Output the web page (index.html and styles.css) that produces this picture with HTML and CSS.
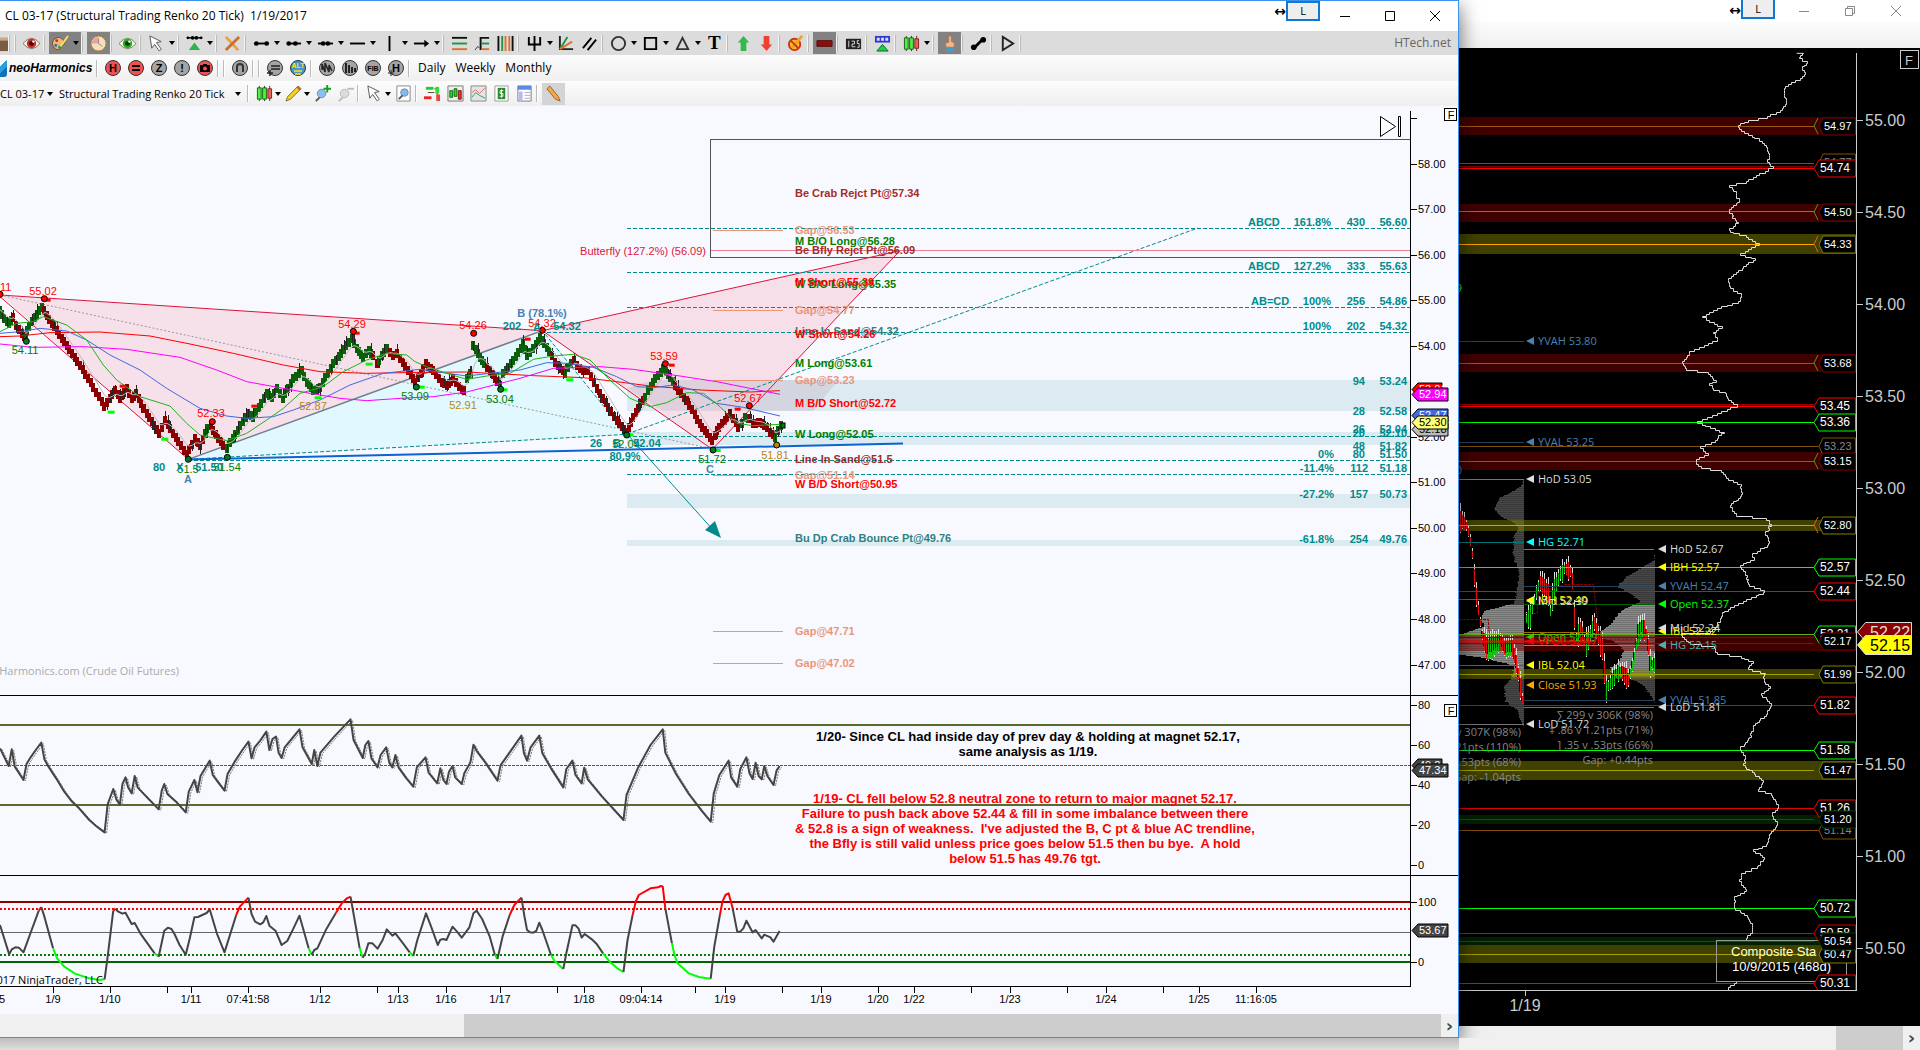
FILE: index.html
```html
<!DOCTYPE html>
<html lang="en">
<head>
<meta charset="utf-8">
<title>CL 03-17 (Structural Trading Renko 20 Tick)</title>
<link rel="stylesheet" href="styles.css">
</head>
<body>
<svg class="sprite" aria-hidden="true">
  <symbol id="caret" viewBox="0 0 8 8"><path d="M1 2h6L4 6z"/></symbol>
  <symbol id="box" viewBox="0 0 18 18"><path d="M0 3h12v14H0z" fill="#7a5c44"/><path d="M0 3h12v3H0z" fill="#c9a98c"/></symbol>
  <symbol id="eye-red" viewBox="0 0 18 18"><path d="M0 9q9-11 18 0-9 11-18 0z" fill="#fff8ea" stroke="#7d6a4a"/><circle cx="9" cy="9" r="5" fill="#c83030"/><circle cx="9" cy="9" r="2.500" fill="#300"/><circle cx="11" cy="7" r="1.300" fill="#fff"/></symbol>
  <symbol id="eye-green" viewBox="0 0 18 18"><path d="M0 9q9-11 18 0-9 11-18 0z" fill="#fffef0" stroke="#6a7d4a"/><circle cx="9" cy="9" r="5" fill="#28a828"/><circle cx="9" cy="9" r="2.500" fill="#030"/><circle cx="11" cy="7" r="1.300" fill="#fff"/></symbol>
  <symbol id="palette" viewBox="0 0 18 18"><path d="M1 6q7-8 13 2-1 3-4 3-1 6-6 4-5-4-3-9z" fill="#e8b878" stroke="#7a4a18"/><circle cx="5" cy="6" r="1.500" fill="#d22"/><circle cx="4" cy="11" r="1.500" fill="#26d"/><circle cx="8" cy="13" r="1.500" fill="#2a2"/><path d="M17 1L9 12" stroke="#f8e060" stroke-width="2"/></symbol>
  <symbol id="clock" viewBox="0 0 18 18"><circle cx="9" cy="9" r="8" fill="#f4dfb8" stroke="#b07838"/><path d="M9 9V2a7 7 0 0 0-7 7z" fill="#e8a0a0"/><path d="M9 4v5l4 3" fill="none" stroke="#888"/></symbol>
  <symbol id="cursor" viewBox="0 0 18 18"><path d="M2 1l12 6-5 1 5 7-2 2-5-7-3 4z" fill="#fff" stroke="#555"/></symbol>
  <symbol id="swing" viewBox="0 0 18 18"><path d="M1 3h16" stroke="#000" stroke-width="1.500"/><circle cx="2" cy="3" r="1.500"/><circle cx="7" cy="3" r="2"/><circle cx="11" cy="3" r="2"/><circle cx="16" cy="3" r="1.500"/><path d="M9 8l6 8H3z" fill="#2eb44c"/></symbol>
  <symbol id="pencils" viewBox="0 0 18 18"><path d="M2 2l13 14" stroke="#e8a040" stroke-width="3"/><path d="M16 2L2 16" stroke="#c87030" stroke-width="3"/></symbol>
  <symbol id="seg" viewBox="0 0 18 18"><path d="M3 9h12" stroke="#000" stroke-width="2"/><circle cx="3.500" cy="9" r="2.500"/><circle cx="14.500" cy="9" r="2.500"/></symbol>
  <symbol id="ray" viewBox="0 0 18 18"><path d="M2 9h15" stroke="#000" stroke-width="2"/><circle cx="4" cy="9" r="2.500"/><circle cx="11" cy="9" r="2.500"/></symbol>
  <symbol id="xline" viewBox="0 0 18 18"><path d="M1 9h16" stroke="#000" stroke-width="2"/><circle cx="6.500" cy="9" r="2.500"/><circle cx="11.500" cy="9" r="2.500"/></symbol>
  <symbol id="hline" viewBox="0 0 18 18"><path d="M1 9h16" stroke="#000" stroke-width="2"/></symbol>
  <symbol id="vline" viewBox="0 0 18 18"><path d="M9 1v16" stroke="#000" stroke-width="2"/></symbol>
  <symbol id="arrow" viewBox="0 0 18 18"><path d="M1 9h12" stroke="#000" stroke-width="2"/><path d="M12 5l5 4-5 4z"/></symbol>
  <symbol id="fibh" viewBox="0 0 18 18"><path d="M1 3h16" stroke="#111" stroke-width="2"/><path d="M1 9h16" stroke="#1a9a40" stroke-width="2"/><path d="M1 15h16" stroke="#e07030" stroke-width="2"/></symbol>
  <symbol id="fibe" viewBox="0 0 18 18"><path d="M7 2v14M7 3h9" stroke="#111" stroke-width="2" fill="none"/><path d="M8 9h8" stroke="#1a9a40" stroke-width="2"/><path d="M8 15h8" stroke="#e07030" stroke-width="2"/><path d="M1 16l3-4 2 2" stroke="#333" fill="none"/></symbol>
  <symbol id="fibv" viewBox="0 0 18 18"><path d="M1.500 1v16M16.500 1v16" stroke="#111" stroke-width="2"/><path d="M5.500 1v16" stroke="#1a9a40" stroke-width="2"/><path d="M9 1v16" stroke="#e07030" stroke-width="2"/><path d="M13 1v16" stroke="#e07030" stroke-width="2"/></symbol>
  <symbol id="fork" viewBox="0 0 18 18"><path d="M3 2v8h12V2M9 1v16" stroke="#000" stroke-width="2" fill="none"/></symbol>
  <symbol id="fan" viewBox="0 0 18 18"><path d="M2 1v14h14" stroke="#222" stroke-width="2" fill="none"/><path d="M2 15L10 2" stroke="#1a9a40" stroke-width="2"/><path d="M2 15L15 7" stroke="#e07030" stroke-width="2"/></symbol>
  <symbol id="par" viewBox="0 0 18 18"><path d="M2 14L11 3M7 16L16 5" stroke="#000" stroke-width="2"/></symbol>
  <symbol id="circle" viewBox="0 0 18 18"><circle cx="9" cy="9" r="7" fill="none" stroke="#333" stroke-width="2"/></symbol>
  <symbol id="rect" viewBox="0 0 18 18"><path d="M3 3h12v12H3z" fill="none" stroke="#000" stroke-width="2"/></symbol>
  <symbol id="tri" viewBox="0 0 18 18"><path d="M9 3l6 12H3z" fill="none" stroke="#333" stroke-width="2"/></symbol>
  <symbol id="up" viewBox="0 0 18 18"><path d="M9 1l6 7h-3v9H6V8H3z" fill="#35b850"/></symbol>
  <symbol id="down" viewBox="0 0 18 18"><path d="M9 17l6-7h-3V1H6v9H3z" fill="#f04030"/></symbol>
  <symbol id="erase" viewBox="0 0 18 18"><circle cx="8" cy="10" r="6" fill="#f8c020" stroke="#d03020" stroke-width="2"/><path d="M16 1L5 14" stroke="#f0a030" stroke-width="3"/><path d="M4 6l8 8" stroke="#d03020" stroke-width="2"/></symbol>
  <symbol id="bar" viewBox="0 0 18 18"><path d="M1 6h16v6H1z" fill="#8a1010" stroke="#5a0808"/></symbol>
  <symbol id="count" viewBox="0 0 18 18"><path d="M1 4h16v11H1z" fill="#222"/><path d="M4 6v7M7 6.500h3v3H7.500v3H11M13 6h2M13 9h2v4h-2M13 6v3" stroke="#ddd" fill="none"/></symbol>
  <symbol id="grid" viewBox="0 0 18 18"><path d="M1 1h16v7H1z" fill="#3038d0"/><path d="M3 3h3v3H3zM7.500 3h3v3h-3zM12 3h3v3h-3z" fill="#dde"/><path d="M9 10l6 7H3z" fill="#20d040" stroke="#063"/></symbol>
  <symbol id="candles" viewBox="0 0 18 18"><path d="M3.500 1v16M9 1v16M14.500 1v16" stroke="#333"/><path d="M1.500 3h4v12h-4zM7 3h4v12H7z" fill="#50f040" stroke="#186018"/><path d="M12.500 4h4v10h-4z" fill="#e86060" stroke="#802020"/></symbol>
  <symbol id="hand" viewBox="0 0 18 18"><path d="M8 1h3v6l3 1v5H5V8h3z" fill="#f0b890" stroke="#b07850"/><path d="M6 14h7v4H6z" fill="#3aa0d8"/></symbol>
  <symbol id="bone" viewBox="0 0 18 18"><path d="M5 13L13 5" stroke="#000" stroke-width="3"/><circle cx="4" cy="13" r="3"/><circle cx="14" cy="5" r="3"/></symbol>
  <symbol id="play" viewBox="0 0 18 18"><path d="M4 2l11 7-11 7z" fill="none" stroke="#222" stroke-width="2"/></symbol>
  <symbol id="zoomin" viewBox="0 0 18 18"><path d="M2 17l5-5" stroke="#555" stroke-width="2"/><circle cx="8" cy="9" r="4.500" fill="#88c0f0" stroke="#6890b8"/><path d="M14 0v8M10 4h8" stroke="#10a020" stroke-width="2"/></symbol>
  <symbol id="zoomout" viewBox="0 0 18 18"><path d="M2 17l5-5" stroke="#bbb" stroke-width="2"/><circle cx="8" cy="9" r="4.500" fill="#dcdcdc" stroke="#bbb"/><path d="M11 4h7" stroke="#bbb" stroke-width="2"/></symbol>
  <symbol id="find" viewBox="0 0 18 18"><path d="M2 1h14v16H2z" fill="#fff" stroke="#888"/><circle cx="10" cy="8" r="4" fill="#88b8e8" stroke="#6890b8"/><path d="M4 15l4-4" stroke="#555" stroke-width="2"/></symbol>
  <symbol id="pencil" viewBox="0 0 18 18"><path d="M14 1l3 3L6 15l-5 2 2-5z" fill="#f0d030" stroke="#8a7010"/><path d="M13 2l3 3" stroke="#d05050" stroke-width="2"/></symbol>
  <symbol id="pencil2" viewBox="0 0 18 18"><path d="M5 1L2 4l9 11 5 2-2-5z" fill="#f0a850" stroke="#a06020"/></symbol>
  <symbol id="dom" viewBox="0 0 18 18"><path d="M2 2h8v3H2z" fill="#2c2"/><path d="M0 12h8v3H0z" fill="#e22"/><path d="M4 8h7M11 4h3v10" stroke="#444" fill="none"/><path d="M12 2h4v7h-4z" fill="#3d3"/><path d="M13 10h4v7h-4z" fill="#e44"/></symbol>
  <symbol id="chart" viewBox="0 0 18 18"><path d="M1 1h16v16H1z" fill="#eee" stroke="#777"/><path d="M3 6h3v7H3zM7.500 4h3v8h-3z" fill="#2d2" stroke="#161"/><path d="M12 6h3v9h-3z" fill="#e33" stroke="#711"/></symbol>
  <symbol id="lines" viewBox="0 0 18 18"><path d="M1 1h16v16H1z" fill="#e4e4e4" stroke="#888"/><path d="M2 8l4-3 4 4 6-6" stroke="#e07070" fill="none"/><path d="M2 13l4-5 4 3 6 3" stroke="#30a060" fill="none"/></symbol>
  <symbol id="money" viewBox="0 0 18 18"><path d="M2 1h14v16H2z" fill="#fff" stroke="#999"/><path d="M5 3h8v12H5z" fill="#2a8a2a"/><path d="M11 6H7.500v3h3v3H7M9 4.500v9" stroke="#fff" fill="none"/></symbol>
  <symbol id="props" viewBox="0 0 18 18"><path d="M2 1h14v16H2z" fill="#fff" stroke="#778"/><path d="M2 1h14v4H2z" fill="#5a8ae0"/><path d="M3 7h4v9H3z" fill="#b8b8f0"/><path d="M9 8h6M9 11h6M9 14h6" stroke="#aac"/></symbol>
</svg>

<main class="desktop">
  <div class="front-col">
    <section class="win front">
      <header class="titlebar">
        <h1 class="title">CL 03-17 (Structural Trading Renko 20 Tick)  1/19/2017</h1>
        <span class="link-arrow">↔</span>
        <button class="linkbtn" type="button">L</button>
        <button class="winbtn" type="button" aria-label="Minimize"><svg viewBox="0 0 12 12"><path d="M1 6.500h10"/></svg></button>
        <button class="winbtn" type="button" aria-label="Maximize"><svg viewBox="0 0 12 12"><path d="M1.500 1.500h9v9h-9z"/></svg></button>
        <button class="winbtn" type="button" aria-label="Close"><svg viewBox="0 0 12 12"><path d="M1 1l10 10M11 1L1 11"/></svg></button>
      </header>
      <nav class="bar draw" id="drawbar" aria-label="Drawing tools"></nav>
      <nav class="bar" id="neobar" aria-label="neoHarmonics"></nav>
      <nav class="bar low" id="chartbar" aria-label="Chart"></nav>
      <svg class="chart" id="renko" viewBox="0 106 1458 908" role="img" aria-label="CL renko chart"></svg>
      <div class="scroll"><i class="thumb"></i><button type="button" aria-label="Scroll right">›</button></div>
    </section>
    <div class="under"></div>
  </div>
  <section class="win back">
    <header class="titlebar dim">
      <span class="link-arrow">↔</span>
      <button class="linkbtn" type="button">L</button>
      <button class="winbtn" type="button" aria-label="Minimize"><svg viewBox="0 0 12 12"><path d="M1 6.500h10"/></svg></button>
      <button class="winbtn" type="button" aria-label="Restore"><svg viewBox="0 0 12 12"><path d="M1.500 3.500h7v7h-7zM3.500 3V1.500h7v7H9"/></svg></button>
      <button class="winbtn" type="button" aria-label="Close"><svg viewBox="0 0 12 12"><path d="M1 1l10 10M11 1L1 11"/></svg></button>
    </header>
    <div class="blank"></div>
    <svg class="chart" id="profile" viewBox="1459 48 461 978" role="img" aria-label="CL volume profile chart"></svg>
    <div class="scroll wide"><i class="thumb"></i><button type="button" aria-label="Scroll right">›</button></div>
  </section>
</main>
<script src="app.js"></script>
</body>
</html>
```
FILE: styles.css
```css
* { box-sizing: border-box; }
body { margin: 0; background: #f0f0f0; font: 11px/16px "Open Sans", "Noto Sans", sans-serif; color: #000; }
button, select { font: inherit; color: inherit; border: 0; padding: 0; margin: 0; background: none; }
.sprite { position: absolute; width: 0; height: 0; }
.desktop { display: grid; grid-template-columns: 1459fr 461fr; }
.front-col { display: flex; flex-direction: column; position: relative; z-index: 1; }
.win { display: flex; flex-direction: column; min-width: 0; }
.front { border: solid #3a92f0; border-width: 1px 1px 1px 0; background: #fff; box-shadow: 0 6px 20px rgba(0,0,0,.6); clip-path: inset(0 -30px 0 0); }
.under { flex: 1; min-height: 12px; background: linear-gradient(#bdbdbd, #dfdfdf); }
.titlebar { display: flex; height: 30px; align-items: center; background: #fff; }
.title { flex: 1; margin: 0; padding-left: 5px; font-size: 12px; font-weight: 400; white-space: pre; }
.link-arrow { font: bold 14px/20px "DejaVu Sans", sans-serif; align-self: flex-start; }
.linkbtn { width: 34px; height: 20px; border: 2px solid #0f78d4; background: #eee; align-self: flex-start; margin-right: 2px; }
.winbtn { width: 45px; height: 30px; display: flex; align-items: center; justify-content: center; }
.winbtn:last-child { margin-right: 1px; }
.winbtn svg { width: 12px; height: 12px; fill: none; stroke: #000; }
.back { background: #000; }
.back .titlebar { height: 21px; justify-content: flex-end; }
.dim .winbtn { height: 20px; width: 46px; }
.dim .winbtn svg { stroke: #888; }
.dim .linkbtn { height: 19px; margin-right: 6px; border-top: 0; }
.blank { height: 27px; background: linear-gradient(#fdfdfd, #f0f0f0); }
.bar { display: flex; align-items: center; height: 26px; background: linear-gradient(#fcfcfc, #efefef); overflow: hidden; }
.bar.low { height: 25px; }
.bar.draw { height: 24px; background: #dcdcdc; }
.tool { display: flex; align-items: center; width: 23px; height: 22px; flex: none; padding-left: 3px; }
.tool svg { width: 17px; height: 17px; flex: none; }
.tool.drop { width: 32px; }
.low .tool.drop { width: 29px; }
.tool.on { background: #828282; }
.tool.lit { background: #d4d4d4; }
.tool .caret, .pick .caret { width: 8px; height: 8px; margin-left: 3px; }
.low .tool .caret { margin-left: 1px; }
.tool.letter { font: bold 19px/20px "Liberation Serif", serif; padding-left: 5px; }
.sep { width: 6px; height: 17px; flex: none; border-left: 1px solid #bbb; border-right: 4px solid transparent; box-shadow: inset 1px 0 #fff; }
.draw .sep { border-left-color: #f4f4f4; box-shadow: inset 1px 0 #bbb; }
.tool.cut { width: 8px; overflow: hidden; padding: 0; }
.site { margin-left: auto; padding-right: 7px; color: #666; font-size: 12px; }
.brand { font: italic bold 12px/16px "Liberation Sans", sans-serif; width: 89px; padding-left: 2px; }
.logo { width: 7px; height: 18px; background: linear-gradient(135deg, #fff 30%, #28a0e0 30% 60%, #1070b8 60%); border-radius: 0 3px 3px 0; }
.round svg { width: 18px; height: 18px; }
.round { padding-left: 2px; }
.round text { font: bold 10px "Liberation Sans", sans-serif; text-anchor: middle; }
.period { padding: 0 6px 0 4px; font-size: 12px; }
.pick { display: flex; align-items: center; }
.pick select { appearance: none; font-size: 11px; overflow: hidden; white-space: nowrap; }
.pick .sym { width: 45px; }
.pick .series { width: 174px; }
.pick .caret { margin: 0 5px 0 1px; }
.chart { display: block; width: 100%; height: auto; overflow: hidden; }
#renko { background: #f8f9fe; }
#profile { background: #000; }
.chart text { font-family: "Liberation Sans", Arial, sans-serif; font-size: 11px; white-space: pre; }
.chart .b { font-weight: bold; }
.chart .note { font-size: 13px; font-weight: bold; }
.chart .s12 { font-size: 12px; }
.chart .s13 { font-size: 13px; }
.chart .s16 { font-size: 16px; }
.chart .ui { font-family: "Open Sans", "Noto Sans", sans-serif; }
.scroll { display: flex; height: 23px; background: #f0f0f0; justify-content: flex-end; }
.scroll .thumb { width: 67%; background: #cdcdcd; }
.scroll button { width: 17px; font: bold 18px/18px "DejaVu Sans", sans-serif; color: #444; }
.wide { height: 24px; }
.wide .thumb { width: 67px; }
```
FILE: app.js
```js
// ---------- toolbars ----------
const icon = id => `<svg><use href="#${id}"/></svg>`;
const caret = '<svg class="caret"><use href="#caret"/></svg>';
function toolbar(el, spec) {
  el.innerHTML = spec.trim().split(/\s+/).map(s => {
    if (s === '|') return '<i class="sep"></i>';
    const [id, ...flags] = s.split('.');
    const drop = flags.includes('drop');
    return `<button type="button" aria-label="${id}" class="tool ${flags.join(' ')}">${id === 'T' ? 'T' : icon(id)}${drop ? caret : ''}</button>`;
  }).join('');
}
toolbar(drawbar, `box.cut | | eye-red | palette.drop.on | clock.on | eye-green | cursor.drop | swing.drop | pencils |
  seg.drop ray.drop xline.drop hline.drop vline.drop arrow.drop | fibh fibe fibv | fork.drop fan par |
  circle.drop rect.drop tri.drop T.letter | up down | erase | bar.on | count | grid | candles.drop | hand.on | bone | play |`);
drawbar.insertAdjacentHTML('beforeend', '<span class="site">HTech.net</span>');

const disc = (fill, mark) => `<button type="button" class="tool round"><svg viewBox="0 0 18 18"><circle cx="9" cy="9" r="7.5" fill="${fill}" stroke="#333"/>${mark}</svg></button>`;
const glyph = (t, s = 11) => `<text x="9" y="13" style="font-size:${s}px">${t}</text>`;
const R = '#f05050', G = '#a4a4a4', sep = '<i class="sep"></i>';
neobar.innerHTML = '<i class="logo"></i><span class="brand">neoHarmonics</span>' + sep +
  [disc(R, glyph('H')), disc(R, '<path d="M5 7h8M5 11h8" stroke="#000" stroke-width="2"/>'), disc(G, glyph('Z')), disc(G, glyph('!')),
   disc(R, '<path d="M4 6h10v7H4zM7 5h4v2H7z"/><circle cx="9" cy="9.500" r="2" fill="#f05050"/>'), sep, sep,
   disc(G, '<path d="M6 13V8a3 3 0 0 1 6 0v5" fill="none" stroke="#333" stroke-width="2"/>'), sep, sep,
   disc(G, '<path d="M5 7h9M5 10h9M1 14h6M4 11v6" stroke="#222" fill="none" stroke-width="1.500"/>'),
   disc('#4898d0', '<path d="M5 12h8M6 15h6" stroke="#fd2" stroke-width="1.500"/><text x="9" y="9" fill="#fd2" style="font-size:7px">ALT</text>'), sep,
   disc(G, '<path d="M4 11V5l3 8V4l4 9V6l3 6" stroke="#222" fill="none" stroke-width="1.500"/>'),
   disc(G, '<path d="M5 4v10M8 6v8M11 8v6M14 9v4" stroke="#222" stroke-width="2"/>'),
   disc(G, '<text x="9" y="12" style="font-size:7px">FIB</text>'),
   disc(G, glyph('H') + '<path d="M1 14h6M4 11v6" stroke="#222"/>'), sep].join('') +
  ['Daily', 'Weekly', 'Monthly'].map(t => `<button type="button" class="period">${t}</button>`).join('');

toolbar(chartbar, '| candles.drop pencil.drop zoomin zoomout | cursor.drop find | dom chart lines money props | pencil2.lit');
chartbar.insertAdjacentHTML('afterbegin',
  `<span class="pick"><select class="sym" aria-label="Instrument"><option>CL 03-17</option></select>${caret}</span>
   <span class="pick"><select class="series" aria-label="Series"><option>Structural Trading Renko 20 Tick</option></select>${caret}</span>`);

// ---------- drawing helpers ----------
function pen(svg) {
  const add = (name, a, t) => {
    const e = document.createElementNS('http://www.w3.org/2000/svg', name);
    for (const k in a) e.setAttribute(k, a[k]);
    if (t !== undefined) e.textContent = t;
    svg.append(e);
  };
  return {
    add,
    line: (x1, y1, x2, y2, c, w = 1, dash = '') => add('path', { d: `M${x1} ${y1}L${x2} ${y2}`, stroke: c, 'stroke-width': w, 'stroke-dasharray': dash }),
    rect: (x, y, w, h, fill, extra = {}) => add('rect', { x, y, width: w, height: h, fill, ...extra }),
    poly: (p, c, w = 1, extra = {}) => add('polyline', { points: p.map(q => q.join()).join(' '), fill: 'none', stroke: c, 'stroke-width': w, 'stroke-linejoin': 'round', ...extra }),
    text: (x, y, t, c = '#000', cls = '', anchor = 'start') => add('text', { x, y: y + 4, fill: c, class: cls, 'text-anchor': anchor }, t)
  };
}
const pairs = s => s.trim().split(/\s+/).map(p => p.split(',').map(Number));
const map = (p, f) => p.map(([x, y, ...r]) => [...f(x, y), ...r]);
let seed = 7;
const rnd = () => (seed = (seed * 16807) % 2147483647) / 2147483647;

// ---------- renko chart ----------
const L = pen(renko);
const u = (x, y) => [x / 3, 270 + y / 3];
const P = s => map(pairs(s), u);
const TEAL = '#008b8b', RIGHT = 1410;

[[380, 31], [432, 13], [494, 14], [540, 6]].forEach(([y, h]) => L.rect(627, y, RIGHT - 627, h, '#dcebf1'));
L.poly(P('0,75 1627,182 565,568'), 'none', 0, { style: 'fill:#f6e0ea' });
L.poly(P('1627,182 2137,538 2700,-58'), 'none', 0, { style: 'fill:#f6dfe9' });
L.poly(P('565,568 1627,185 1880,493'), 'none', 0, { style: 'fill:#e0f8fe' });
L.poly(P('1880,355 1960,330 2515,330 2440,422 1985,422'), 'none', 0, { style: 'fill:#c9c0d2;fill-opacity:.5' });

L.poly(P('0,75 1627,182 2700,-58 2137,538 1627,182'), '#dc143c');
L.poly(P('0,80 565,568'), '#dc143c');
L.poly(P('565,568 1627,182'), '#6f7f90', 1.5);
L.poly(P('0,75 1250,345 2120,533'), '#999', 1, { 'stroke-dasharray': '2 2' });
L.poly(P('565,568 1880,493 1627,182'), TEAL, 1, { 'stroke-dasharray': '4 2' });
L.line(627, 434, 1198, 228, TEAL, 1, '4 2');
L.line(627, 434, 714, 531, TEAL);
L.add('path', { d: 'M721 538L705 530 715 521z', fill: TEAL });

[[627, 228.5], [627, 272.5], [627, 307.5], [541, 332.5], [627, 436.5], [188, 460.5], [627, 474.5]]
  .forEach(([x, y]) => L.line(x, y, RIGHT, y, TEAL, 1, '4 2'));
L.rect(710.5, 139.5, 700, 118, 'none', { stroke: '#555' });
L.line(711, 250.5, RIGHT, 250.5, '#f08095');
[230.5, 310.5, 380.5, 475.5, 631.5, 663.5].forEach(y => L.line(713, y, 783, y, '#e9967a'));

// Colour, then the brick path in order
const RED = '#8b0000', GRN = '#0a5f0a';
const runs = [
  [GRN, '0,120 12,145 27,160 40,140'], [RED, '48,165 65,190 78,205'], [GRN, '80,180 105,140 125,112 133,120'],
  [RED, '140,135 170,180 200,225 240,285 280,350 313,408 345,360 360,385 380,355 395,385 408,370 440,430 478,490 495,450 510,475 560,552 585,505 600,525 615,490'],
  [GRN, '622,475 632,465'], [RED, '640,480 670,525 680,535'],
  [GRN, '690,515 745,430 760,440 800,370 815,380 830,355 848,385 880,325 905,300 920,335 940,360 960,350 1000,280 1055,205 1070,235 1090,260 1108,240 1120,255'],
  [RED, '1130,280 1138,270'], [GRN, '1145,255 1160,235 1170,245'],
  [RED, '1180,255 1190,250 1225,300 1245,335 1278,280 1300,300 1325,335 1340,345 1360,325 1385,358 1392,360 1402,325'],
  [GRN, '1410,310 1413,312'], [GRN, '1420,225 1440,260 1460,290'], [RED, '1470,300 1500,345'],
  [GRN, '1510,310 1540,270 1570,220 1582,255 1600,235 1620,200 1640,230 1655,255'],
  [RED, '1665,275 1695,310'], [GRN, '1705,290 1722,270'],
  [RED, '1732,285 1750,300 1765,300 1800,370 1850,450 1880,485 1900,440 1920,400 1935,380'],
  [GRN, '1945,360 1965,325 1990,295 2010,320 2025,345'],
  [RED, '2035,360 2060,390 2100,460 2137,510 2150,480 2190,430 2215,470 2225,460'],
  [GRN, '2235,440 2250,445'], [RED, '2260,460 2280,455 2300,470 2310,485 2325,500'], [GRN, '2335,480 2344,465']
];
const closes = [];
const wicks = [];
let prev = null;
for (const [col, s] of runs) {
  const p = pairs(s);
  if (prev && Math.abs(p[0][1] - prev[1]) < 60) p.unshift(prev);
  prev = p[p.length - 1];
  for (let i = 0; i < p.length - 1; i++) {
    const [x0, y0] = p[i], [x1, y1] = p[i + 1], n = Math.max(1, Math.round((x1 - x0) / 8));
    for (let k = i ? 1 : 0; k <= n; k++) {
      const [x, y] = u(x0 + (x1 - x0) * k / n, y0 + (y1 - y0) * k / n);
      closes.push([x, y]);
      if (rnd() > 0.6) wicks.push([Math.round(x), Math.round(y - rnd() * 10)]);
      L.rect(Math.round(x) - 2, Math.round(y) - 4, 4, 9, col);
    }
  }
}
wicks.forEach(([x, y]) => L.rect(x, y, 1, 10, '#222'));
let ema = closes[0][1];
L.poly(closes.map(([x, y]) => [x, ema += (y - ema) * 0.3]), '#bbb');

L.poly(P('0,200 60,198 150,188 300,186 450,198 570,222 700,250 850,285 960,305 1100,310 1260,307 1400,306 1600,317 1750,323 1850,335 1950,348 2100,360 2250,366 2340,362'), '#f00');
L.poly(P('0,222 100,232 250,230 380,238 540,262 650,300 740,335 850,355 930,370 1020,385 1100,392 1200,385 1300,380 1400,366 1470,348 1560,325 1660,295 1800,290 1900,298 2040,318 2150,335 2250,355 2340,373'), '#f0f');
L.poly(P('0,190 60,185 120,175 200,183 260,210 330,255 420,300 500,355 600,415 680,438 740,445 820,440 880,420 960,390 1050,345 1150,310 1260,298 1330,308 1400,318 1470,310 1560,300 1640,278 1700,280 1780,292 1850,320 1910,350 1960,353 2020,345 2080,360 2150,400 2230,412 2340,438'), '#4169e1');
L.poly(P('0,185 50,160 100,155 130,140 200,165 260,210 310,285 350,330 420,380 510,408 560,460 600,495 680,512 740,490 800,450 850,415 900,370 970,350 1030,305 1100,270 1160,250 1220,255 1245,275 1280,290 1340,310 1400,328 1460,318 1530,310 1600,268 1660,258 1720,253 1770,270 1830,330 1890,385 1950,410 2000,398 2060,368 2110,370 2160,410 2210,460 2260,467 2340,463'), '#1cb41c');
L.poly([[188, 459.5], [903, 443.5]], '#0a64d2', 2);
L.rect(781, 423, 4, 5, '#008000', { stroke: '#000' });

P('332,425 493,506 953,382 1106,281 1262,350 1510,358 1708,328 1888,493 2150,540').forEach(([x, y]) => L.rect(x - 3, y - 1, 7, 3, '#0f0'));
P('143,89 368,347 763,407 1070,188 1583,206 2015,284 2213,416').forEach(([x, y]) => L.rect(x - 3, y - 1, 6, 3, '#f00'));
const dots = (s, c) => P(s).forEach(([cx, cy]) => L.add('circle', { cx, cy, r: 3, fill: c, stroke: '#000' }));
dots('0,73 133,86 637,455 1060,184 1421,190 1627,181 1996,281 2248,407', '#f00');
dots('79,214 565,568 682,562 1249,351 1502,358 1880,495 2139,540', '#007a20');
dots('2330,525', '#b8860b');

const pivots = (c, cls, list) => list.forEach(([x, y, t]) => { const [a, b] = u(x, y); L.text(Math.round(a), Math.round(b), t, c, cls, 'middle'); });
pivots('#f00', '', [[-6, 50, '55.11'], [130, 63, '55.02'], [634, 430, '52.33'], [1057, 162, '54.29'], [1418, 166, '54.26'], [1625, 160, '54.32'], [1993, 259, '53.59'], [2244, 385, '52.67']]);
pivots('#008000', '', [[76, 240, '54.11'], [565, 598, '51.5'], [680, 591, '51.54'], [1246, 378, '53.09'], [1499, 387, '53.04'], [1878, 522, '52.04'], [2137, 568, '51.72']]);
pivots('#b8860b', '', [[940, 408, '52.87'], [1390, 405, '52.91'], [2326, 556, '51.81']]);
pivots(TEAL, 'b', [[477, 591, '80'], [541, 591, 'X'], [628, 591, '51.50'], [1536, 168, '202'], [1611, 170, 'A'], [1700, 168, '54.32'], [1788, 519, '26'], [1850, 519, 'B'], [1942, 519, '52.04'], [1875, 558, '80.9%']]);
pivots('#4682b4', 'b', [[563, 628, 'A'], [1627, 130, 'B (78.1%)'], [2130, 598, 'C']]);
L.text(706, 251, 'Butterfly (127.2%) (56.09)', '#dc143c', '', 'end');

const BR = '#a52a2a', SAL = '#e9967a', GREEN = '#008000';
[[193, 'Be Crab Rejct Pt@57.34', BR], [230, 'Gap@56.53', SAL], [241, 'M B/O Long@56.28', GREEN], [250, 'Be Bfly Rejct Pt@56.09', BR],
 [284, 'W B/O Long@55.35', GREEN], [282, 'M Short@55.39', 'red'], [310, 'Gap@54.77', SAL], [331, 'Line In Sand@54.32', '#2f8080'],
 [334, 'W Short@54.26', 'red'], [363, 'M Long@53.61', GREEN], [380, 'Gap@53.23', SAL], [403, 'M B/D Short@52.72', 'red'],
 [434, 'W Long@52.05', GREEN], [459, 'Line In Sand@51.5', BR], [475, 'Gap@51.14', SAL], [484, 'W B/D Short@50.95', 'red'],
 [538, 'Bu Dp Crab Bounce Pt@49.76', '#2f8080'], [631, 'Gap@47.71', SAL], [663, 'Gap@47.02', SAL]
].forEach(([y, t, c]) => L.text(795, y, t, c, 'b'));

[[222, 'ABCD', '161.8%', '430', '56.60'], [266, 'ABCD', '127.2%', '333', '55.63'], [301, 'AB=CD', '100%', '256', '54.86'],
 [326, '', '100%', '202', '54.32'], [381, '', '', '94', '53.24'], [411, '', '', '28', '52.58'], [429, '', '', '26', '52.04'],
 [433, '', '', '20', '52.10'], [446, '', '', '48', '51.82'], [454, '', '0%', '80', '51.50'], [468, '', '-11.4%', '112', '51.18'],
 [494, '', '-27.2%', '157', '50.73'], [539, '', '-61.8%', '254', '49.76']
].forEach(([y, n, p, c, v]) => {
  L.text(n.length > 4 ? 1251 : 1248, y, n, TEAL, 'b');
  L.text(y > 450 ? 1334 : 1331, y, p, TEAL, 'b', 'end');
  L.text(y > 460 ? 1368 : 1365, y, c, TEAL, 'b', 'end');
  L.text(1407, y, v, TEAL, 'b', 'end');
});

// Replay glyph and the panel boxes
L.add('path', { d: 'M1380.500 116.500v20l15-10zM1398.500 116.500h2v20h-2z', fill: '#fff', stroke: '#000' });
[108.5, 704.5].forEach(y => { L.rect(1444.5, y, 12, 12, '#fff', { stroke: '#000' }); L.text(1451, y + 6, 'F', '#000', '', 'middle'); });

// Oscillators: samples on a 1568 x 1230 grid over the lower panels
const o = (x, y) => [x / 1.96, 640 + y / 3];
const O = s => map(pairs(s), o);
L.line(0, 725, RIGHT, 725, '#556b2f', 2);
L.line(0, 805, RIGHT, 805, '#556b2f', 2);
L.line(0, 765.5, RIGHT, 765.5, '#555', 1, '3 1');
const osc = O('0,325 17,378 23,328 29,380 46,420 52,372 60,352 70,330 81,308 87,358 95,380 110,415 126,455 140,483 155,505 175,540 190,560 205,577 211,493 222,447 228,478 235,494 240,432 246,412 251,442 258,460 264,408 270,443 290,475 311,508 317,452 322,432 328,462 345,485 364,517 370,455 381,420 387,457 393,408 411,362 417,405 428,428 440,452 446,402 460,365 475,330 487,305 493,355 499,322 510,302 522,275 528,330 534,297 541,290 546,338 552,354 558,322 570,300 587,268 593,322 611,372 616,330 622,378 628,338 655,290 687,238 693,300 711,354 716,315 722,303 728,355 740,382 746,345 757,322 763,368 769,382 775,345 781,382 795,412 810,440 817,382 834,352 840,398 857,430 863,385 869,420 875,432 880,395 887,378 892,412 905,432 910,400 922,367 928,314 935,335 950,365 975,422 981,376 1000,335 1022,287 1027,340 1033,362 1040,322 1057,287 1063,340 1080,385 1104,442 1110,387 1122,362 1128,405 1140,430 1145,383 1152,418 1180,470 1222,540 1228,465 1250,385 1275,315 1299,268 1304,338 1325,402 1350,462 1375,512 1393,545 1399,460 1410,405 1428,362 1433,412 1445,440 1451,387 1463,352 1469,400 1475,417 1481,368 1487,408 1493,418 1498,378 1504,408 1516,435 1522,392 1528,378');
L.poly(osc.map(([x, y]) => [x + 2, y + 1]), '#777', 1, { 'stroke-dasharray': '2 1' });
L.poly(osc, '#444', 2);

L.line(0, 902, RIGHT, 902, '#8b0000', 2);
L.line(0, 909, RIGHT, 909, '#f00', 2, '2 2');
L.line(0, 932.5, RIGHT, 932.5, '#666');
L.line(0, 955, RIGHT, 955, '#008000', 2, '2 2');
L.line(0, 962, RIGHT, 962, '#006400', 2);
const hot = '#f00', low = '#0f0', mid = '#444';
let last = null;
[[mid, '0,855 18,943 23,928 30,922 37,923 46,937 62,870 76,812'], [hot, '81,801'], [mid, '87,830 104,925'],
 [low, '112,955 126,980 147,1001 175,1015 195,1020 205,1018'], [mid, '211,950 222,812'], [hot, '226,806'],
 [mid, '232,815 240,821 246,818 258,852 264,849 275,880 303,940'], [low, '311,950'],
 [mid, '322,872 329,863 336,867 342,882 352,915 364,944 372,895 381,832 388,831 405,819 411,808 425,880 440,937 463,825'],
 [hot, '470,800 487,773'], [mid, '493,822 500,845 510,853 516,847 522,828 528,857 540,872 552,915 563,903 575,866 587,827 605,925'],
 [low, '611,944'], [mid, '616,930 622,925 640,866 658,820'], [hot, '670,790 680,775 687,770'], [mid, '705,925'], [low, '711,953'],
 [mid, '716,940 722,910 730,910 740,926 750,900 758,868 769,887 775,880 790,910 803,937'], [low, '810,948'],
 [mid, '818,900 835,820 845,860 858,915 863,899 869,897 875,900 887,860 897,877 905,893 920,862 928,820 934,812 945,837 960,890 970,945'],
 [low, '975,957'], [mid, '985,890 999,825'], [hot, '1008,795 1022,773'],
 [mid, '1028,830 1033,870 1039,877 1045,878 1051,873 1057,848 1063,870 1080,945'], [low, '1087,963 1104,987'],
 [mid, '1110,940 1122,856 1128,856 1134,866 1140,893 1146,882 1160,898 1170,913 1182,940'], [low, '1195,965 1210,985 1222,996'],
 [mid, '1230,900 1240,825'], [hot, '1246,785 1252,765 1275,745 1290,742 1295,738 1299,740 1304,805'], [mid, '1317,910'],
 [low, '1322,945 1328,970 1350,1000 1370,1011 1393,1016'], [mid, '1400,920 1411,825'], [hot, '1416,785 1422,765 1428,760 1436,805'],
 [mid, '1445,875 1451,875 1457,865 1463,842 1475,877 1481,870 1493,895 1498,884 1510,892 1516,905 1528,873']
].forEach(([c, s]) => { const p = O(s); L.poly(last ? [last, ...p] : p, c, 2); last = p[p.length - 1]; });

['1/20- Since CL had inside day of prev day & holding at magnet 52.17,', 'same analysis as 1/19.']
  .forEach((t, i) => L.text(1028, 737 + i * 15, t, '#000', 'note', 'middle'));
['1/19- CL fell below 52.8 neutral zone to return to major magnet 52.17.', 'Failure to push back above 52.44 & fill in some imbalance between there',
 "& 52.8 is a sign of weakness.  I've adjusted the B, C pt & blue AC trendline,", 'the Bfly is still valid unless price goes below 51.5 then bu bye.  A hold',
 'below 51.5 has 49.76 tgt.'].forEach((t, i) => L.text(1025, 799 + i * 15, t, '#f00', 'note', 'middle'));
L.text(179, 671, 'www.neoHarmonics.com (Crude Oil Futures)', '#aaa', 'ui', 'end');
L.text(103, 980, '© 2017 NinjaTrader, LLC', '#000', 'ui', 'end');

// Axes
L.line(0, 695.5, 1458, 695.5, '#000');
L.line(0, 875.5, 1458, 875.5, '#000');
L.line(0, 986.5, 1411, 986.5, '#000');
L.line(1410.5, 111, 1410.5, 987, '#000');
L.line(1411, 118.5, 1417, 118.5, '#000');
const tick = (y, t) => { L.line(1411, Math.round(y) + .5, 1417, Math.round(y) + .5, '#000'); L.text(1418, Math.round(y), t); };
for (let p = 58; p >= 47; p--) if (p !== 53) tick(163.5 + (58 - p) * 45.55, p + '.00');
[[705, '80'], [745, '60'], [785, '40'], [825, '20'], [865, '0'], [902, '100'], [962, '0']].forEach(a => tick(...a));
[[2, '5'], [53, '1/9'], [110, '1/10'], [167], [191, '1/11'], [248, '07:41:58'], [320, '1/12'], [377], [398, '1/13'], [446, '1/16'],
 [500, '1/17'], [557], [584, '1/18'], [641, '09:04:14'], [695], [725, '1/19'], [782], [821, '1/19'], [878, '1/20'], [914, '1/22'],
 [971], [1010, '1/23'], [1067], [1106, '1/24'], [1163], [1199, '1/25'], [1256, '11:16:05']
].forEach(([x, t]) => { if (x > 5) L.line(x + .5, 987, x + .5, 993, '#000'); if (t) L.text(x, 999, t, '#000', '', 'middle'); });

const flag = (y, w, bg, t, fg) => {
  L.add('path', { d: `M1412 ${y + .5}l6 -6.500h${w - 6}v13h${6 - w}z`, fill: bg, stroke: '#000' });
  L.text(1419, y, t, fg);
};
flag(389, 30, '#f00', '53.01', '#fff');
flag(394, 36, '#f0f', '52.94', '#fff');
flag(429, 36, '#bbb', '52.18', '#000');
flag(415, 36, '#4169e1', '52.47', '#fff');
flag(422, 36, '#ffff78', '52.30', '#000');
flag(765, 30, '#444', '49.2', '#fff');
flag(770, 36, '#444', '47.34', '#fff');
flag(930, 36, '#444', '53.67', '#fff');

// ---------- volume profile chart ----------
const V = pen(profile);
const q = (x, y) => [1450 + x / 3, 460 + y / 2.6576];
const Q = s => map(pairs(s), q);
const shape = (s, edge) => {
  const p = Q(s);
  for (let y = Math.ceil(p[0][1]); y < p[p.length - 1][1]; y++) {
    const i = p.findIndex(a => a[1] > y); if (i < 1) continue;
    const [x0, y0] = p[i - 1], [x1, y1] = p[i];
    const x = Math.round(x0 + (x1 - x0) * (y - y0) / (y1 - y0) + rnd() * 2);
    const va = y > 604 && y < 677;
    V.rect(x, y, edge - x, 1, y % 2 ? (va ? '#8a8a8a' : '#484848') : (va ? '#707070' : '#383838'));
  }
};
shape('218,48 210,70 145,100 130,130 150,150 180,160 205,180 190,200 185,250 205,300 190,380 100,400 90,425 100,440 27,465 20,515 100,525 190,545 180,580 160,600 165,640 200,665 215,700 218,706', 1524);
shape('613,238 610,265 570,285 525,310 500,335 530,350 570,375 510,400 485,430 450,455 440,470 490,480 520,505 505,535 480,550 480,570 540,580 580,600 605,630 615,657', 1655);

const band = (y, y2, c) => V.rect(1459, y, 397, y2 - y, c, { 'fill-opacity': .5 });
[[117, 135], [204, 222], [354, 372], [452, 470], [635, 651]].forEach(a => band(...a, '#800000'));
[[234, 254], [520, 531], [669, 679], [761, 780], [945, 963]].forEach(a => band(...a, '#808000'));
[[815, 824], [937, 945]].forEach(a => band(...a, '#004000'));

const candles = s => {
  const p = Q(s);
  for (let x = Math.ceil(p[0][0]); x < p[p.length - 1][0]; x += 2) {
    const i = p.findIndex(a => a[0] > x);
    const [x0, y0] = p[i - 1], [x1, y1] = p[i], y = y0 + (y1 - y0) * (x - x0) / (x1 - x0), h = 5 + rnd() * 11;
    V.rect(x - 1, Math.round(y - h / 2), 2, Math.round(h), '#111');
    V.rect(x, Math.round(y - h), 1, Math.round(2 * h), '#ddd');
    V.rect(x, Math.round(y - h / 2), 1, Math.round(h * 1.4), y1 > y0 ? '#e01010' : '#10c010');
  }
};
candles('24,150 45,165 58,200 68,260 75,340 85,400 95,460 110,495 130,490 150,475 165,500 185,490 197,530 207,580 217,640 222,650');
candles('226,420 240,410 255,360 268,320 280,330 295,350 300,400 310,340 330,300 345,285 358,290 368,320 375,480 390,440 405,490 415,470 432,430 445,470 458,500 466,610 480,590 500,560 515,560 535,580 550,530 565,450 580,440 590,460 600,540 615,540');
V.poly(Q('27,424 115,424 118,470 218,470'), '#8b0000', 1, { 'stroke-dasharray': '3 1' });
V.poly(Q('226,408 262,408 265,352 310,340 345,331 430,331 445,440 460,478 560,478 580,459 615,459'), '#8b0000', 1, { 'stroke-dasharray': '3 1' });

const h = (y, c, x2 = 1814, x1 = 1459, w = 1) => V.line(x1, y + .5, x2, y + .5, c, w);
const BN = '#80500a', STEEL = '#24435c';
h(126, '#9a5a10'); h(163, BN); h(166, '#800000'); h(211, '#5a9a10'); h(363, '#9a5a10'); h(404, '#a00000'); h(446, BN, 1819); h(461, '#9a5a10');
h(830, BN, 1819); h(244, '#ffa500'); h(525, '#e0a000'); h(674, '#a0a000'); h(770, '#a0a000'); h(954, '#a0a000'); h(819, '#006000'); h(941, '#006000');
[168, 406, 591, 983].forEach(y => h(y, '#f00'));
[705, 808, 933].forEach(y => h(y, '#e00000'));
[422, 567, 750, 908].forEach(y => h(y, '#0f0'));
h(634, '#60b010'); h(641, '#ff0000', 1595, 1459, 2); h(643, '#a00000'); h(637, '#900000');
h(341, STEEL, 1524); h(442, STEEL, 1524); h(479, '#777', 1524); h(542, '#007878', 1524); h(599, '#707000', 1524); h(665, '#707000', 1524); h(724, '#777', 1524);
h(549, '#777', 1654, 1524); h(586, STEEL, 1654, 1524); h(604, '#006000', 1654, 1524); h(645, '#40a0a0', 1654, 1524); h(700, STEEL, 1654, 1524); h(707, '#777', 1654, 1524); h(632, '#a07000', 1590, 1524);

// Composite profile outline, drawn as small steps
const stairs = p => {
  let d = `M${p[0]}`;
  for (let i = 1; i < p.length; i++) {
    const [x0, y0] = p[i - 1], [x1, y1] = p[i], n = Math.max(1, Math.round(Math.abs(y1 - y0) / 2));
    for (let k = 1; k <= n; k++) d += `H${Math.round(x0 + (x1 - x0) * k / n + rnd() * 2 - 1) + .5}V${Math.round(y0 + (y1 - y0) * k / n) + .5}`;
  }
  V.add('path', { d, fill: 'none', stroke: '#ddd' });
};
const top7 = map(pairs('1040,160 1060,160 1045,175 1072,188 1055,205 1065,222 1050,240 1003,265 1000,290 1010,300 1003,318 990,335 950,355 895,365 862,380 880,400 915,415 945,435 960,465 950,485 968,505 930,525 885,548 838,560 855,580 868,605 835,632 850,655 865,670 838,690 845,700 885,710 925,735 870,765 915,780 880,805 835,840 840,865 875,885 865,908 800,930 752,952 780,965 812,985 790,1000 803,1022 760,1040 718,1058 697,1088 710,1110 775,1122 795,1145 780,1155 790,1170 825,1180 835,1200 858,1220 800,1245 742,1268 780,1285 820,1300 795,1325 752,1345 775,1365 735,1385 750,1405 810,1417 835,1440 862,1452'), (x, y) => [1450 + x / 3, y / 3]);
stairs([...top7, ...Q('870,65 875,95 838,125 860,150 950,160 960,175 945,200 960,220 945,235 905,252 910,265 870,285 885,300 895,335 945,350 905,370 850,390 815,410 800,445 780,460 690,465 720,490 790,500 800,515 870,525 910,540 890,555 945,570 940,590 960,605 935,625 965,655 945,680 910,710 900,740 868,770 885,790 880,810 910,835 940,855 925,880 965,890 985,925 962,945 982,970 955,1000 950,1025 912,1040 940,1060 920,1085 870,1103 870,1125 888,1145 855,1165 850,1190 885,1210 908,1235 905,1258 888,1275')]);
stairs(Q('872,1386 850,1395 835,1408'));

V.rect(1716.5, 940.5, 130, 41, 'none', { stroke: '#999' });
V.text(1731, 952, 'Composite Sta', '#ffffd8', 's13');
V.text(1732, 967, '10/9/2015 (468d)', '#fff', 's13');

const mark = (x, y, t, c) => { V.add('path', { d: `M${x} ${y}l8 -4v8z`, fill: c }); V.text(x + 12, y, t, c, 'ui'); };
const W = '#ddd', ST = '#4682b4', Y = '#ff0', LM = '#0f0';
[[341, 'YVAH 53.80', ST], [442, 'YVAL 53.25', ST], [479, 'HoD 53.05', W], [542, 'HG 52.71', '#0ff'], [601, 'Mid 52.39', W], [600, 'IBH 52.40', Y],
 [637, 'Open 52.19', '#40c010'], [641, 'VPOC 52.17', 'red'], [665, 'IBL 52.04', Y], [685, 'Close 51.93', 'orange'], [724, 'LoD 51.72', W]
].forEach(([y, t, c]) => mark(1526, y, t, c));
[[549, 'HoD 52.67', W], [567, 'IBH 52.57', Y], [586, 'YVAH 52.47', ST], [604, 'Open 52.37', LM], [631, 'IBL 52.22', Y], [628, 'Mid 52.24', W],
 [645, 'HG 52.15', '#48b0b0'], [700, 'YVAL 51.85', ST], [707, 'LoD 51.81', W]
].forEach(([y, t, c]) => mark(1658, y, t, c));
['∑ 299 v 306K (98%)', '‡ .86 v 1.21pts (71%)', '] .35 v .53pts (66%)', 'Gap: +0.44pts'].forEach((t, i) => V.text(1653, 715 + i * 15, t, '#888', 'ui', 'end'));
['∑ 300 v 307K (98%)', '‡ 1.33 v 1.21pts (110%)', '] .36 v .53pts (68%)', 'Gap: -1.04pts'].forEach((t, i) => V.text(1521, 732 + i * 15, t, '#888', 'ui', 'end'));
V.text(1462, 288, '9', LM, 'ui', 'end');
V.text(1462, 470, '0', ST, 'ui', 'end');

const tag = (y, t, c, o = {}) => {
  const x = o.in ? 1819 : 1814, s = o.in ? 4 : 5;
  V.add('path', { d: `M${x} ${y + .5}l${s} -8.500H1855.500v17H${x + s}z`, fill: '#000', stroke: c });
  if (o.edge) V.add('path', { d: `M1818 ${y - 8}l-4 8 4 8`, fill: 'none', stroke: o.edge });
  V.text(o.in || o.edge ? 1824 : 1820, y, t, o.fg || '#fff', o.in || o.edge ? '' : 's12');
};
const A = { in: 1 }, E = { in: 1, edge: '#5a9a10' }, F = { in: 1, edge: '#f06010' };
tag(126, '54.97', '#800000', E); tag(162, '54.77', BN, { in: 1, fg: '#888' }); tag(168, '54.74', '#f00'); tag(212, '54.50', '#800000', E);
tag(244, '54.33', '#808000', F); tag(363, '53.68', '#800000', E); tag(406, '53.45', '#f00'); tag(446, '53.23', BN, { in: 1, fg: '#888' });
tag(422, '53.36', '#0f0'); tag(461, '53.15', '#800000', E); tag(525, '52.80', '#808000', F); tag(567, '52.57', '#0f0'); tag(591, '52.44', '#f00');
tag(634, '52.21', '#0f0'); tag(641, '52.17', '#800000', A); tag(674, '51.99', '#808000', A); tag(705, '51.82', '#f00'); tag(750, '51.58', '#0f0');
tag(770, '51.47', '#808000', A); tag(830, '51.14', BN, { in: 1, fg: '#888' }); tag(808, '51.26', '#f00'); tag(819, '51.20', '#004000', A);
tag(908, '50.72', '#0f0'); tag(933, '50.58', '#d00000'); tag(983, '50.31', '#f00'); tag(954, '50.47', '#808000', A); tag(941, '50.54', '#004000', A);

V.line(1856.5, 53, 1856.5, 991, '#ccc');
V.rect(1459, 991, 461, 35, '#000');
V.line(1459, 990.5, 1857, 990.5, '#ccc');
V.line(1525.5, 991, 1525.5, 996, '#ccc');
V.text(1525, 1007, '1/19', '#ccc', 's16', 'middle');
for (let i = 0; i < 10; i++) {
  const y = Math.round(120 + i * 92);
  V.line(1857, y + .5, 1863, y + .5, '#ccc');
  V.text(1865, y + 2, (55 - i / 2).toFixed(2), '#ccc', 's16');
}
const last2 = (y, bg, t, fg) => { V.add('path', { d: `M1857.500 ${y}l8 -9.500h46v19h-46z`, fill: bg, stroke: '#ddd' }); V.text(1870, y + 2, t, fg, 's16'); };
last2(632, '#8b0000', '52.22', '#ddd');
last2(645, '#ff0', '52.15', '#000');
V.rect(1900.5, 50.5, 18, 18, '#000', { stroke: '#ccc' });
V.text(1909, 61, 'F', '#ccc', 's13', 'middle');
```
